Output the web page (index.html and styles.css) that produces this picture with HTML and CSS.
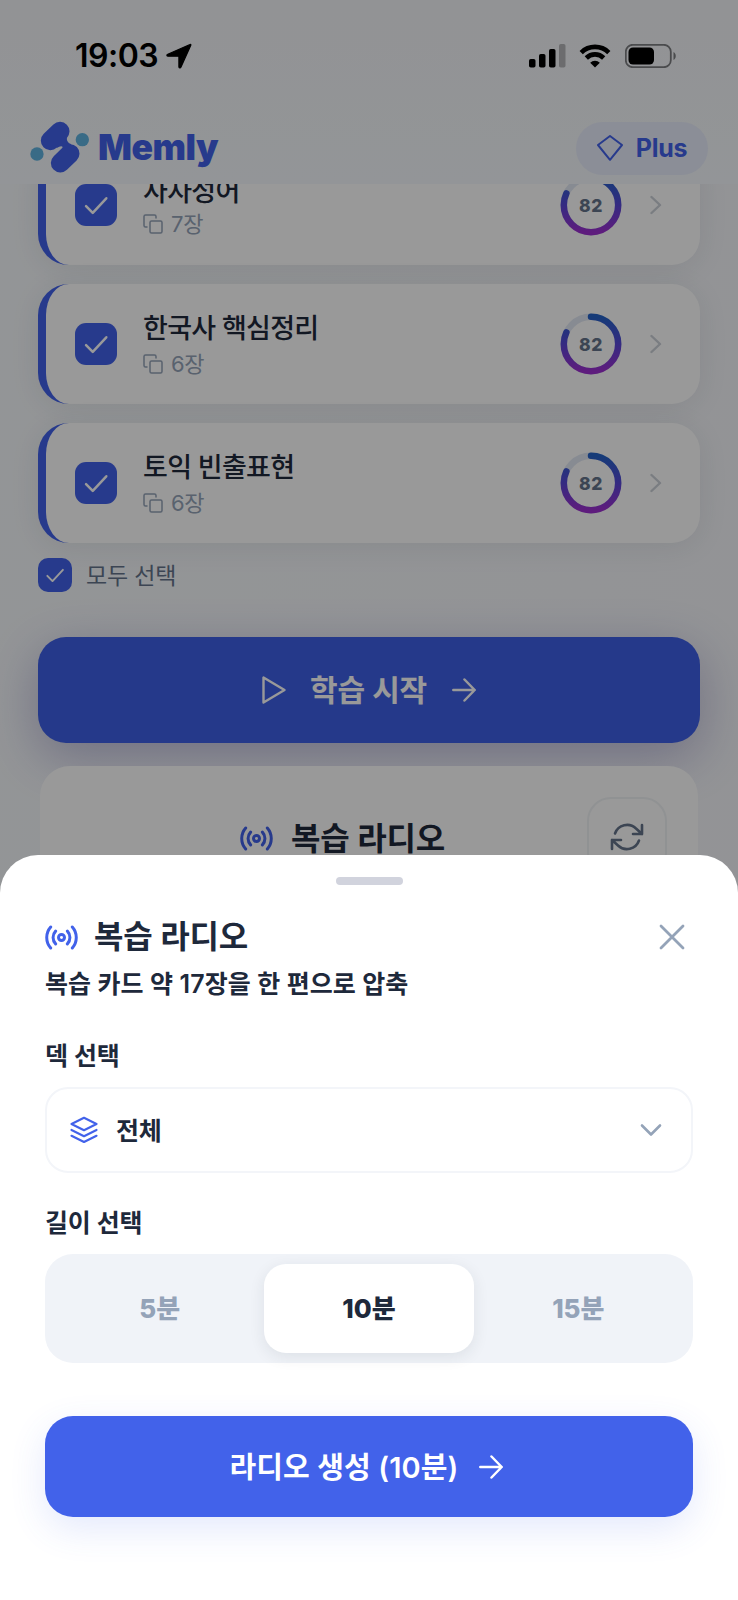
FILE: index.html
```html
<!DOCTYPE html>
<html lang="ko">
<head>
<meta charset="utf-8">
<title>Memly</title>
<link rel="stylesheet" href="styles.css">
</head>
<body>
<svg class="defs" width="0" height="0" aria-hidden="true">
  <defs>
    <linearGradient id="ring" gradientUnits="userSpaceOnUse" x1="58" y1="0" x2="4" y2="0">
      <stop offset="0" stop-color="#2563c8"/><stop offset=".5" stop-color="#5848d8"/><stop offset="1" stop-color="#9d2fd0"/>
    </linearGradient>
    <symbol id="check" viewBox="0 0 24 24"><path d="M2.800 13 9 19.300 21.500 5.800"/></symbol>
    <symbol id="copy" viewBox="0 0 20 20"><rect x="7" y="7" width="12" height="12" rx="1.500"/><path d="M4 13H2.500A1.500 1.500 0 0 1 1 11.500V2.500A1.500 1.500 0 0 1 2.500 1H11.500A1.500 1.500 0 0 1 13 2.500V4"/></symbol>
    <symbol id="next" viewBox="0 0 12 20"><path d="M1.500 2 10 10 1.500 18"/></symbol>
    <symbol id="arrow" viewBox="0 0 24 24"><path d="M1.300 12H22.500M12.500 1.500 22.700 12 12.500 22.500"/></symbol>
    <symbol id="radio" viewBox="0 0 32 24"><circle cx="16" cy="12" r="2.900"/><path d="M10.300 5.800a9 9 0 0 0 0 12.400M21.700 5.800a9 9 0 0 1 0 12.400M5.500 1.800a15.500 15.500 0 0 0 0 20.400M26.500 1.800a15.500 15.500 0 0 1 0 20.400"/></symbol>
    <symbol id="score" viewBox="0 0 62 62"><circle class="ring-track" cx="31" cy="31" r="27.200"/><circle class="ring-value" cx="31" cy="31" r="27.200" pathLength="100" transform="rotate(-90 31 31)"/></symbol>
  </defs>
</svg>

<div class="screen">
  <div class="top">
    <div class="status">
      <div class="clock">19:03
        <svg class="location" width="26" height="26" viewBox="0 0 26 26"><path d="M24 1.500 1.800 11.200c-1.500.7-1.100 2 .3 2h10.200c.4 0 .6.2.6.600v9.900c0 1.500 1.500 1.700 2.100.3L24.800 2.200c.2-.6-.2-1-.8-.7z"/></svg>
      </div>
      <div class="indicators">
        <svg width="37" height="24" viewBox="0 0 37 24"><rect x="0" y="15" width="6.500" height="8.500" rx="1.800"/><rect x="10" y="10" width="6.500" height="13.500" rx="1.800"/><rect x="20" y="5" width="6.500" height="18.500" rx="1.800"/><rect class="dim" x="30" y="0" width="6.500" height="23.500" rx="1.800"/></svg>
        <svg class="wifi" width="32" height="24" viewBox="0 0 32 24"><path class="arc" d="M2.200 8.600a19.500 19.500 0 0 1 27.600 0M7.300 14a12.300 12.300 0 0 1 17.400 0"/><path d="M16 23.500 11.200 18.700a6.800 6.800 0 0 1 9.600 0z"/></svg>
        <svg class="battery" width="52" height="24" viewBox="0 0 52 24"><rect class="shell" x=".8" y=".8" width="45" height="22.400" rx="7"/><rect x="3.500" y="3.500" width="25.500" height="17" rx="4.500"/><path class="tip" d="M48.500 8v8c3-1.500 3-6.500 0-8z"/></svg>
      </div>
    </div>
    <header class="header">
      <div class="brand">
        <svg class="logo" width="60" height="54" viewBox="0 0 180 162"><path class="pill" d="M90 34 61 62M120 101 91 129"/><path class="join" d="M112 48Q106 66 124 73L112 104 78 108Q101 90 98 81 94 76 80 84L80 60z"/><circle cx="157" cy="59" r="20"/><circle cx="21" cy="102" r="20"/></svg>
        <span class="wordmark">Memly</span>
      </div>
      <div class="plan">
        <svg width="26" height="26" viewBox="0 0 26 26"><path d="M13 1 25 10 13 24.800 1 10z"/></svg>
        <span>Plus</span>
      </div>
    </header>
  </div>

  <main class="content">
    <div class="deck">
      <span class="box"><svg><use href="#check"/></svg></span>
      <div class="info"><div class="name">사자성어</div><div class="count"><svg><use href="#copy"/></svg>7장</div></div>
      <div class="score"><svg><use href="#score"/></svg><span>82</span></div>
      <svg class="next"><use href="#next"/></svg>
    </div>
    <div class="deck">
      <span class="box"><svg><use href="#check"/></svg></span>
      <div class="info"><div class="name">한국사 핵심정리</div><div class="count"><svg><use href="#copy"/></svg>6장</div></div>
      <div class="score"><svg><use href="#score"/></svg><span>82</span></div>
      <svg class="next"><use href="#next"/></svg>
    </div>
    <div class="deck">
      <span class="box"><svg><use href="#check"/></svg></span>
      <div class="info"><div class="name">토익 빈출표현</div><div class="count"><svg><use href="#copy"/></svg>6장</div></div>
      <div class="score"><svg><use href="#score"/></svg><span>82</span></div>
      <svg class="next"><use href="#next"/></svg>
    </div>
    <div class="all"><span class="box small"><svg><use href="#check"/></svg></span><span class="all-text">모두 선택</span></div>
    <div class="start">
      <svg class="play" width="24" height="28" viewBox="0 0 24 28"><path d="M1.500 1.500V26.500L22.500 14z"/></svg>
      <span>학습 시작</span>
      <svg class="arrow"><use href="#arrow"/></svg>
    </div>
    <section class="radio-card">
      <div class="radio-title"><svg class="radio"><use href="#radio"/></svg><span>복습 라디오</span></div>
      <div class="refresh"><svg width="34" height="30" viewBox="0 0 34 30"><path d="M32 3v9h-9M2 27v-9h9M5 11.500A12.800 12.800 0 0 1 26 6.500l6 5.500M2 18l6 5.500A12.800 12.800 0 0 0 29 18.500"/></svg></div>
    </section>
  </main>

  <div class="scrim"></div>

  <section class="sheet">
    <div class="handle"></div>
    <div class="sheet-head">
      <svg class="radio"><use href="#radio"/></svg>
      <h2>복습 라디오</h2>
      <svg class="close" width="26" height="26" viewBox="0 0 26 26"><path d="M2 2 24 24M24 2 2 24"/></svg>
    </div>
    <p class="summary">복습 카드 약 17장을 한 편으로 압축</p>
    <div class="label">덱 선택</div>
    <div class="select">
      <svg width="28" height="28" viewBox="0 0 28 28"><path d="M14 1.800 26.500 8 14 14.200 1.500 8zM1.500 14 14 20.200 26.500 14M1.500 19.800 14 26 26.500 19.800"/></svg>
      <span>전체</span>
      <svg class="down" width="22" height="14" viewBox="0 0 22 14"><path d="M2 2.500 11 11.500 20 2.500"/></svg>
    </div>
    <div class="label second">길이 선택</div>
    <div class="segments">
      <div>5분</div><div class="active">10분</div><div>15분</div>
    </div>
    <div class="create"><span>라디오 생성 (10분)</span><svg class="arrow"><use href="#arrow"/></svg></div>
  </section>
</div>
</body>
</html>
```
FILE: styles.css
```css
* { box-sizing: border-box; }
body { margin: 0; font-family: Inter, "Noto Sans CJK KR", sans-serif; color: #1e293b; }
svg { display: block; flex: none; fill: none; stroke-linecap: round; stroke-linejoin: round; }
.defs { position: absolute; }
.screen { position: relative; width: 738px; height: 1600px; overflow: hidden; background: linear-gradient(100deg, #f6f9fc, #f5f6fa); white-space: nowrap; }

.top { height: 184px; background: linear-gradient(#f4f5f8, #f5f9fd); }
.status { display: flex; justify-content: space-between; height: 110px; padding: 0 61px 0 75px; align-items: center; }
.clock { display: flex; align-items: center; gap: 8px; margin-top: 1px; font-size: 32px; font-weight: 600; letter-spacing: -.5px; color: #000; line-height: 40px; }
.location { fill: #000; stroke: #000; stroke-width: 1.200; }
.indicators { display: flex; align-items: center; gap: 14px; margin-top: 1px; }
.indicators svg { fill: #000; }
.indicators .wifi { margin-left: -1px; }
.indicators .dim { fill: #b4b5b8; }
.indicators .arc { fill: none; stroke: #000; stroke-width: 4.600; stroke-linecap: butt; }
.indicators .shell { fill: none; stroke: #7c7d80; stroke-width: 1.800; }
.indicators .tip { fill: #7c7d80; }
.header { display: flex; justify-content: space-between; align-items: center; height: 74px; padding: 0 30px 0 30px; }
.brand { display: flex; align-items: center; gap: 8px; }
.logo { fill: #5fb2df; }
.logo .pill { stroke: #4262ea; stroke-width: 57; }
.logo .join { fill: #4262ea; }
.wordmark { font-size: 35.500px; font-weight: 900; letter-spacing: -.5px; color: #4262ea; }
.plan { display: flex; align-items: center; justify-content: center; gap: 13px; width: 132px; height: 53px; margin-top: 2px; border-radius: 27px; background: #e8edfc; color: #4262ea; font-size: 25px; font-weight: 700; letter-spacing: -.3px; }
.plan svg { stroke: #4262ea; stroke-width: 2; }

.content { height: 1416px; overflow: hidden; padding: 0 38px; }
.deck { display: flex; align-items: center; height: 120px; margin-bottom: 19px; padding: 0 38px 0 29px; border-left: 8px solid #4262ea; border-radius: 31px 28px 28px 31px; background: #fff; box-shadow: 0 4px 30px rgba(30, 41, 59, .09); }
.deck:first-child { margin-top: -38.700px; }
.deck:first-child .count { margin-top: -2px; }
.box { display: flex; flex: none; align-items: center; justify-content: center; width: 42px; height: 42px; border-radius: 11px; background: #4262ea; }
.box svg { width: 26px; height: 26px; stroke: #fff; stroke-width: 2.300; }
.info { flex: 1; margin-left: 26px; padding-top: 3px; }
.name { font-size: 27px; font-weight: 500; letter-spacing: -.7px; line-height: 36px; color: #1e293b; }
.count { display: flex; align-items: center; gap: 8px; margin-top: 1px; font-size: 22px; line-height: 32px; letter-spacing: -.3px; color: #94a3b8; }
.count svg { width: 20px; height: 20px; stroke: #94a3b8; stroke-width: 1.500; }
.score { display: grid; place-items: center; width: 62px; height: 62px; margin-right: 28px; }
.score > * { grid-area: 1 / 1; }
.score svg { width: 62px; height: 62px; }
.score span { font-size: 17.500px; font-weight: 800; letter-spacing: .5px; color: #64748b; }
.ring-track { stroke: #e2e8f4; stroke-width: 6.500; }
.ring-value { stroke: url(#ring); stroke-width: 6.500; stroke-dasharray: 82 100; }
.next { width: 12px; height: 20px; stroke: #cbd0d8; stroke-width: 2.400; }
.all { display: flex; align-items: center; gap: 14px; height: 34px; margin-top: -4px; font-size: 23px; letter-spacing: -.2px; color: #64748b; }
.all-text { padding-bottom: 3px; }
.small { width: 34px; height: 34px; border-radius: 10px; }
.small svg { width: 20px; height: 20px; }
.start { display: flex; align-items: center; justify-content: center; gap: 24px; height: 106px; margin-top: 45px; border-radius: 28px; background: #3f60e6; color: #fff; font-size: 30px; font-weight: 600; letter-spacing: -.2px; box-shadow: 0 14px 50px rgba(66, 60, 150, .32); }
.start span, .create span, .radio-title span { padding-bottom: 4px; }
.start .arrow { margin-left: 1px; }
.play { stroke: #fff; stroke-width: 2.400; }
.arrow { width: 24px; height: 24px; stroke: currentColor; stroke-width: 2.500; }
.radio-card { display: grid; grid-template-columns: 1fr 80px; height: 180px; margin: 23px 2px 0; padding: 31px 31px 0; border-radius: 30px; background: #fff; }
.radio-title { display: flex; align-items: center; justify-content: center; gap: 18px; height: 80px; padding: 2px 0 0 27px; font-size: 32px; font-weight: 600; letter-spacing: -.2px; }
.radio { width: 33px; height: 25px; stroke: #4262ea; stroke-width: 2.900; }
.refresh { display: grid; place-items: center; height: 80px; border: 2px solid #f1f3f6; border-radius: 24px; }
.refresh svg { stroke: #64748b; stroke-width: 2.600; }

.scrim { position: absolute; inset: 0; background: rgba(0, 0, 0, .4); }
.sheet { position: absolute; inset: 855px 0 0; padding: 22px 45px 0; border-radius: 38px 38px 0 0; background: #fff; }
.handle { width: 67px; height: 8px; margin: 0 auto; border-radius: 4px; background: #d1d3dd; }
.sheet-head { display: flex; align-items: center; height: 44px; margin-top: 30px; }
h2 { flex: 1; margin: 0 0 0 16px; padding-bottom: 6px; font-size: 32px; font-weight: 600; letter-spacing: -.2px; }
.close { margin-right: 8px; stroke: #94a3b8; stroke-width: 2.800; }
.summary { margin: 8px 0 0; font-size: 25px; font-weight: 600; line-height: 34px; letter-spacing: .08px; }
.label { height: 34px; margin-top: 38px; font-size: 25px; font-weight: 600; line-height: 34px; letter-spacing: -.2px; }
.select { display: flex; align-items: center; height: 86px; margin-top: 14px; padding: 0 29px 0 23px; border: 2px solid #f3f5f9; border-radius: 23px; font-size: 25px; font-weight: 600; letter-spacing: -.3px; }
.select svg { stroke: #4262ea; stroke-width: 2.200; }
.select span { flex: 1; margin-left: 18px; padding-bottom: 3px; }
.select .down { stroke: #94a3b8; stroke-width: 2.600; }
.second { margin-top: 33px; }
.segments { display: grid; grid-template-columns: repeat(3, 1fr); height: 109px; margin-top: 14px; padding: 10px; border-radius: 28px; background: #f0f3f8; color: #94a3b8; font-size: 26px; font-weight: 800; letter-spacing: 0; }
.segments div { display: grid; place-items: center; padding-bottom: 4px; border-radius: 22px; }
.segments .active { background: #fff; color: #1e293b; box-shadow: 0 4px 16px rgba(30, 41, 59, .09); }
.create { display: flex; align-items: center; justify-content: center; gap: 21px; height: 101px; margin-top: 53px; padding-right: 5px; border-radius: 28px; background: #4262ea; color: #fff; font-size: 29px; font-weight: 600; letter-spacing: .1px; box-shadow: 0 12px 36px rgba(66, 98, 234, .14); }
```
